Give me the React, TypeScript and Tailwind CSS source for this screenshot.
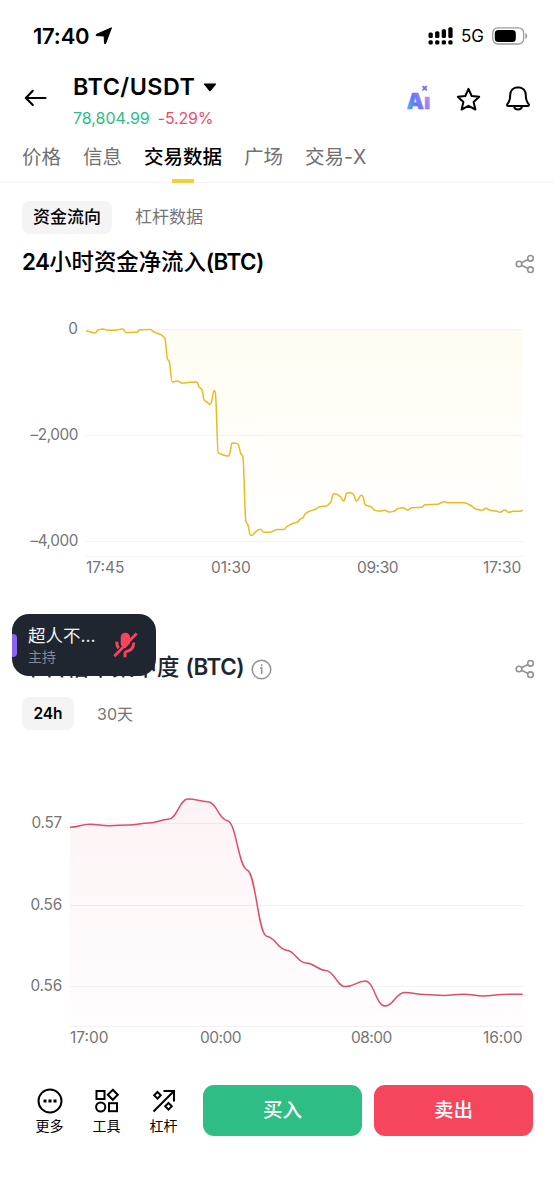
import { useState } from "react";

type Point = [number, number];

const NET_INFLOW: Point[] = [
  [86, 331], [90.7, 332], [95, 333], [98, 330], [103, 329], [107.3, 330.3], [113.3, 330.3], [122.7, 329],
  [126, 332.5], [136.7, 332.3], [140, 329.7], [150, 329.5], [154, 332], [159.3, 334], [164.7, 338], [167.7, 359.7],
  [169, 361], [172.3, 382], [177.7, 381], [181.7, 383], [190, 382.3], [196.7, 382], [199.3, 387.3], [201.7, 389.3],
  [204.3, 400.3], [207, 402], [209.7, 404.3], [211.3, 402.7], [214, 390.7], [215.2, 392], [218.3, 452.7], [220.7, 454],
  [228.3, 456], [230, 452.7], [232, 443], [237.7, 443.7], [241, 454], [242.7, 456], [246, 521.7], [247.7, 524.3],
  [250.7, 535.3], [252.3, 535.3], [255, 532.3], [260.3, 529.3], [264, 532.3], [269.3, 532.3], [278.3, 529.5], [284, 529.5],
  [286.7, 526.7], [293.3, 523.3], [298, 521.7], [300, 519.3], [302.7, 518], [305.3, 513.7], [310, 511], [315.3, 509.3],
  [320, 506.7], [325.3, 506.3], [330.7, 502.3], [333.3, 494], [334.7, 493.7], [340, 496.3], [343.7, 501], [347, 493],
  [350, 492.7], [353, 493.7], [356.7, 501], [361.3, 495.3], [362.7, 496], [365.3, 505], [371, 506.7], [374.3, 510],
  [379.3, 511], [384.7, 510.3], [389.3, 512], [394.7, 511], [397.3, 508.7], [403, 507.7], [407.7, 510], [411.7, 507.7],
  [421.7, 507.3], [425, 504.7], [437.7, 504.3], [444.3, 501.7], [447.7, 502.7], [463.3, 502.7], [470, 505], [476, 509],
  [481.7, 510.3], [486.3, 508.3], [490, 510.3], [496, 511], [500, 512.3], [504.7, 510], [508.7, 512.3], [513.3, 511.3],
  [520, 511.3], [522.7, 510.3],
];

const CONCENTRATION: Point[] = [
  827.3, 824.3, 825.7, 825, 823, 819.3, 799, 801.7, 820.7, 870, 936.3, 950.2,
  963, 970.5, 986.6, 981, 1006, 992.4, 994.4, 995.4, 994.2, 996, 994.4, 994.2,
].map((y, i) => [70 + (i * 452.7) / 23, y]);

// Cubic path whose tangents never overshoot the data; `ease` flattens them
function smoothPath(points: Point[], ease: number) {
  const slope = (i: number) =>
    (points[i + 1][1] - points[i][1]) / (points[i + 1][0] - points[i][0]);
  const tangent = (i: number) => {
    if (i === 0 || i === points.length - 1) return 0;
    const a = slope(i - 1);
    const b = slope(i);
    return a * b <= 0 ? 0 : ((2 * a * b) / (a + b)) * ease;
  };
  let d = `M${points[0][0]} ${points[0][1]}`;
  for (let i = 0; i < points.length - 1; i++) {
    const [x0, y0] = points[i];
    const [x1, y1] = points[i + 1];
    const h = (x1 - x0) * 0.45;
    d += `C${x0 + h} ${y0 + tangent(i) * h} ${x1 - h} ${y1 - tangent(i + 1) * h} ${x1} ${y1}`;
  }
  return d;
}

const TABS = ["价格", "信息", "交易数据", "广场", "交易-X"];

function ShareIcon() {
  return (
    <svg width="20" height="20" viewBox="0 0 20 20" fill="none" stroke="#929292" strokeWidth="1.6">
      <circle cx="4" cy="10" r="2.8" />
      <circle cx="15.5" cy="4.3" r="2.8" />
      <circle cx="15.5" cy="15.7" r="2.8" />
      <path d="M6.6 8.7l6.3-3.2M6.6 11.3l6.3 3.2" />
    </svg>
  );
}

function StatusBar() {
  return (
    <div className="flex h-[70px] items-center justify-between pr-[26px] pl-[33px]">
      <div className="flex items-center gap-1.5 pt-0.5">
        <span className="text-[22px] font-semibold tracking-[-0.2px]">17:40</span>
        <svg width="18" height="18" viewBox="0 0 18 18">
          <path d="M16.5.8 10.6 16.4c-.3.7-1 .6-1.1-.1L9.2 9 1.5 8.6C.7 8.5.7 7.7 1.4 7.4Z" fill="#000" stroke="#000" strokeLinejoin="round" />
        </svg>
      </div>
      <div className="flex items-center pt-0.5">
        <svg width="26" height="18" viewBox="0 0 26 18" fill="#000">
          <rect x="0.5" y="5.5" width="4.3" height="5.5" rx="1.5" />
          <rect x="7.1" y="4.2" width="4.3" height="6.8" rx="1.5" />
          <rect x="13.7" y="2.3" width="4.3" height="8.7" rx="1.5" />
          <rect x="20.3" y="0.3" width="4.3" height="10.7" rx="1.5" />
          <rect x="0.5" y="13.3" width="4.3" height="4.2" rx="1.5" />
          <rect x="7.1" y="13.3" width="4.3" height="4.2" rx="1.5" />
          <rect x="13.7" y="13.3" width="4.3" height="4.2" rx="1.5" />
          <rect x="20.3" y="13.3" width="4.3" height="4.2" rx="1.5" />
        </svg>
        <span className="ml-[7px] w-[31px] pt-0.5 text-[17px] tracking-[-0.2px]">5G</span>
        <svg width="36" height="18" viewBox="0 0 36 18">
          <rect x="0.8" y="0.8" width="30.8" height="16.2" rx="5" fill="none" stroke="#9b9b9b" strokeWidth="1.3" />
          <rect x="2.8" y="2.9" width="21" height="12" rx="3.5" fill="#000" />
          <path d="M33.3 6v6c2.5-1 2.5-5 0-6Z" fill="#9b9b9b" />
        </svg>
      </div>
    </div>
  );
}

function Header() {
  return (
    <header className="flex h-[68px] pr-[23px] pl-6">
      <svg className="mt-[18px] shrink-0" width="24" height="20" viewBox="0 0 24 20" fill="none" stroke="#000" strokeWidth="2.1" strokeLinecap="round" strokeLinejoin="round">
        <path d="M21.5 10H2M8.8 2.8 1.8 10l7 7" />
      </svg>
      <div className="ml-[25px] grow">
        <div className="flex h-[34px] items-center gap-2">
          <h1 className="text-[23.3px] font-semibold tracking-[0.5px]">BTC/USDT</h1>
          <svg width="14" height="9" viewBox="0 0 14 9">
            <path d="M1.5.5h11c.6 0 .8.6.4 1L7.7 8c-.4.4-1 .4-1.4 0L1.1 1.5C.7 1.1.9.5 1.5.5Z" />
          </svg>
        </div>
        <div className="flex h-7 items-center gap-2 text-[16px]">
          <span className="text-[#2dbd85]">78,804.99</span>
          <span className="tracking-[-0.2px] text-[#ef4b67]">-5.29%</span>
        </div>
      </div>
      <div className="flex h-[58px] items-center">
        <svg className="overflow-visible" width="26" height="28" viewBox="0 0 26 28">
          <defs>
            <linearGradient id="ai" x1="0" y1="24" x2="25" y2="12" gradientUnits="userSpaceOnUse">
              <stop stopColor="#45bcff" />
              <stop offset="0.4" stopColor="#6276f6" />
              <stop offset="0.75" stopColor="#9a83f4" />
              <stop offset="1" stopColor="#d193e8" />
            </linearGradient>
          </defs>
          <text x="0.5" y="23.7" fontSize="22" fontWeight="900" textLength="24" lengthAdjust="spacingAndGlyphs" fill="url(#ai)" stroke="url(#ai)" strokeWidth="0.4" strokeLinejoin="round">
            Aı
          </text>
          <path d="M16.5 1l2.2 1 2.2-1-1 2.2 1 2.2-2.2-1-2.2 1 1-2.2Z" fill="#7178f4" stroke="#7178f4" />
        </svg>
        <svg className="ml-6" width="25" height="25" viewBox="0 0 25 25" fill="none" stroke="#000" strokeWidth="2" strokeLinejoin="round">
          <path d="M12.5 1.9l3.2 7.1 7.5.8-5.6 5.1 1.8 7.6-6.9-3.7-6.9 3.7 1.8-7.6L1.8 9.8l7.5-.8Z" />
        </svg>
        <svg className="ml-6" width="26" height="26" viewBox="0 0 26 26" fill="none" stroke="#000" strokeWidth="2" strokeLinejoin="round">
          <path d="M13 1.2c-4.7 0-7.8 3.3-7.8 7.9 0 4.5-1 6.9-2.8 8.9-.7.9-.3 1.9.8 1.9h19.6c1.1 0 1.5-1 .8-1.9-1.8-2-2.8-4.4-2.8-8.9 0-4.6-3.1-7.9-7.8-7.9Z" />
          <path d="M9 20.3c.3 2.2 1.9 3.2 4 3.2s3.7-1 4-3.2" />
        </svg>
      </div>
    </header>
  );
}

function TradeIcon({ kind }: { kind: string }) {
  return (
    <svg className="shrink-0" width="26" height="26" viewBox="0 0 26 26" fill="none" stroke="#000" strokeWidth="2">
      {kind === "more" && (
        <>
          <circle cx="13" cy="13" r="11.5" />
          <path d="M6.5 13h3M11.5 13h3M16.5 13h3" strokeWidth="2.8" />
        </>
      )}
      {kind === "tools" && (
        <>
          <rect x="2.5" y="3" width="8" height="8" />
          <path d="M18.8 1.8l5 5-5 5-5-5Z" />
          <circle cx="6.7" cy="19" r="4.6" />
          <rect x="15" y="15.2" width="8" height="8" />
        </>
      )}
      {kind === "leverage" && (
        <>
          <path d="M2.5 23.5 22.5 3.5M12.5 3H23v10.5" />
          <path d="M6.5 4l3.3 3.3-3.3 3.3-3.3-3.3ZM17.5 15l3.3 3.3-3.3 3.3-3.3-3.3Z" />
        </>
      )}
    </svg>
  );
}

function VoiceBubble() {
  return (
    <div className="absolute top-[614px] left-[12px] flex h-[62px] w-36 items-center overflow-hidden rounded-[17px] bg-[#202630]">
      <span className="h-[23px] w-[5px] rounded-r bg-[#8b63ed]" />
      <div className="ml-[11px] w-[71px] pt-0.5">
        <div className="text-[17.5px] leading-[22px] text-[#f2f3f5]">超人不...</div>
        <div className="text-[14px] leading-5 text-[#848b96]">主持</div>
      </div>
      <svg className="ml-[13px]" width="26" height="28" viewBox="0 0 26 28">
        <rect x="8.7" y="1.7" width="9.3" height="15.5" rx="4.6" fill="#f6465d" />
        <path d="M4.7 10.8c0 3 .6 4.8 1.9 6.4M21.7 11.5c0 5.8-3.2 8.7-8.7 9.3v5.5" fill="none" stroke="#f6465d" strokeWidth="3" />
        <path d="M4.5 27.5 26.5 4.5" stroke="#202630" strokeWidth="1.6" />
        <path d="M2.3 25.3 24.7 2.5" stroke="#f6465d" strokeWidth="2.8" />
      </svg>
    </div>
  );
}

export default function App() {
  const [tab, setTab] = useState("交易数据");
  const inflow = smoothPath(NET_INFLOW, 0.9);
  const concentration = smoothPath(CONCENTRATION, 0.12);

  return (
    <div className="relative h-[1199px] w-[554px] overflow-hidden bg-white font-['Inter','Noto_Sans_CJK_SC',sans-serif] text-black">
      <StatusBar />
      <Header />

      <nav className="flex h-[45px] gap-[22px] border-b border-[#f5f5f5] pl-[22px] text-[19.5px]">
        {TABS.map((name) => (
          <button
            key={name}
            onClick={() => setTab(name)}
            className={
              name === tab
                ? "flex h-[45px] flex-col items-center font-medium whitespace-nowrap text-black"
                : "flex h-[45px] flex-col items-center whitespace-nowrap text-[#707070]"
            }
          >
            <span className="h-[41px] leading-[39px]">{name}</span>
            {name === tab && <span className="h-1 w-[22px] bg-[#f3cf3b]" />}
          </button>
        ))}
      </nav>

      {/* 24h net inflow */}
      <section>
        <div className="mt-[18px] flex h-[33px] items-center pl-[22px] text-[17px]">
          <span className="flex h-[33px] w-[90px] items-center justify-center rounded-lg bg-[#f4f4f4] pt-px font-medium">资金流向</span>
          <span className="ml-[23px] pt-px text-[#757575]">杠杆数据</span>
        </div>
        <div className="mt-3 flex h-9 items-center justify-between pr-[19px] pl-[22px]">
          <h2 className="-mt-1 text-[22.4px] font-medium">
            <span className="font-semibold tracking-[-0.7px]">24</span>小时资金净流入<span className="font-semibold tracking-[-0.6px]">(BTC)</span>
          </h2>
          <ShareIcon />
        </div>
        <div className="mt-[28px] flex h-[247px] text-[15.3px] text-[#757575]">
          <div className="flex h-[241px] w-[86px] flex-col justify-between pt-[9px] pr-2 text-right leading-5">
            <span>0</span>
            <span className="tracking-[-0.4px]">–2,000</span>
            <span className="tracking-[-0.4px]">–4,000</span>
          </div>
          <svg width="438" height="247" viewBox="86 310 438 247">
            <defs>
              <linearGradient id="inflow" x1="0" y1="330" x2="0" y2="536" gradientUnits="userSpaceOnUse">
                <stop stopColor="#fffcf3" />
                <stop offset="1" stopColor="#fffffd" />
              </linearGradient>
            </defs>
            <path d={`${inflow}V330H86Z`} fill="url(#inflow)" />
            <path d="M86 329.5h437M86 435.5h437M86 541.5h437M86 556.5h437" stroke="#f3f3f3" />
            <path d={inflow} fill="none" stroke="#e8bb20" strokeWidth="1.5" strokeLinejoin="round" />
          </svg>
        </div>
        <div className="flex h-5 pl-[86px] text-[15.5px] leading-[21px] text-[#757575]">
          <span className="w-[125px]">17:45</span>
          <span className="w-[146px]">01:30</span>
          <span className="w-[126px] tracking-[-0.4px]">09:30</span>
          <span>17:30</span>
        </div>
      </section>

      {/* Borrowing concentration */}
      <section>
        <div className="mt-[72px] flex h-9 items-center pr-[19px] pl-[22px]">
          <h2 className="text-[22.4px] font-medium tracking-[0.1px] text-[#202630]">
            平台借币集中度 <span className="font-semibold tracking-[-0.4px]">(BTC)</span>
          </h2>
          <svg className="mt-1 ml-[7px]" width="21" height="21" viewBox="0 0 21 21" fill="none" stroke="#929292" strokeWidth="1.5">
            <circle cx="10.5" cy="10.5" r="9.3" />
            <path d="M9 9h1.7v6M10.6 5.3v2" />
          </svg>
          <span className="mt-1 ml-auto">
            <ShareIcon />
          </span>
        </div>
        <div className="mt-3 flex h-[33px] items-center pl-[22px] text-[16px]">
          <span className="flex h-[33px] w-[52px] items-center justify-center rounded-lg bg-[#f4f4f4] text-[15.5px] font-semibold">24h</span>
          <span className="ml-[23px] text-[#757575]">30天</span>
        </div>
        <div className="mt-[50px] flex h-[247px] text-[15.3px] text-[#757575]">
          <div className="flex h-[216px] w-[70px] flex-col justify-between pt-[33px] pr-2 text-right leading-5 tracking-[-0.2px]">
            <span>0.57</span>
            <span>0.56</span>
            <span>0.56</span>
          </div>
          <svg width="454" height="247" viewBox="70 780 454 247">
            <defs>
              <linearGradient id="concentration" x1="0" y1="800" x2="0" y2="1027" gradientUnits="userSpaceOnUse">
                <stop stopColor="#fdf3f5" />
                <stop offset="1" stopColor="#fffdfe" />
              </linearGradient>
            </defs>
            <path d={`${concentration}V1026.5H70Z`} fill="url(#concentration)" />
            <path d="M70 823.5h453M70 905.5h453M70 986.5h453M70 1026.5h453" stroke="#000" strokeOpacity="0.05" />
            <path d={concentration} fill="none" stroke="#dc4f68" strokeWidth="1.5" strokeLinejoin="round" />
          </svg>
        </div>
        <div className="flex h-[21px] pl-[70px] text-[15.5px] leading-[21px] text-[#757575]">
          <span className="w-[130px]">17:00</span>
          <span className="w-[151px] tracking-[-0.5px]">00:00</span>
          <span className="w-[132px] tracking-[-0.5px]">08:00</span>
          <span className="tracking-[-0.1px]">16:00</span>
        </div>
      </section>

      {/* Trade bar */}
      <footer className="mt-[37px] flex h-[51px] pl-[21px]">
        {[["more", "更多"], ["tools", "工具"], ["leverage", "杠杆"]].map(([kind, label]) => (
          <button key={kind} className="flex w-[57px] flex-col items-center justify-start pt-[3px] text-[14px] leading-6">
            <TradeIcon kind={kind} />
            {label}
          </button>
        ))}
        <button className="ml-[11px] h-[51px] w-[159px] rounded-[11px] bg-[#2ebd85] pt-px text-[19.5px] font-medium text-white">买入</button>
        <button className="ml-3 h-[51px] w-[159px] rounded-[11px] bg-[#f6465d] pt-px text-[19.5px] font-medium text-white">卖出</button>
      </footer>

      <VoiceBubble />
    </div>
  );
}
